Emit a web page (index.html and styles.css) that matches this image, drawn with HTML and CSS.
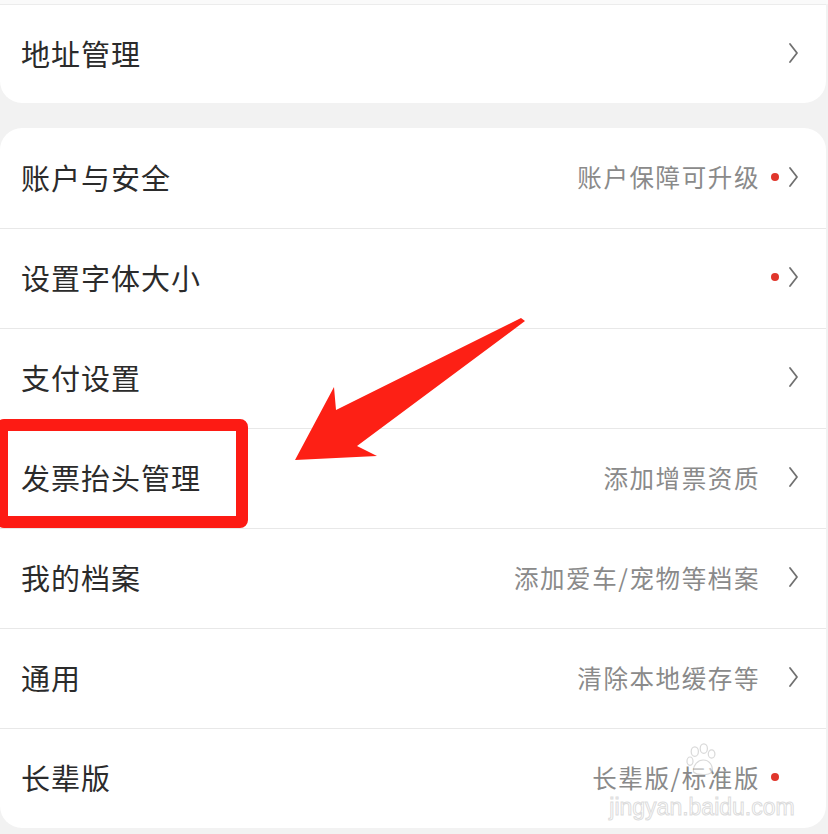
FILE: index.html
```html
<!DOCTYPE html>
<html lang="zh">
<head>
<meta charset="utf-8">
<link rel="stylesheet" href="styles.css">
</head>
<body>
<div class="page">
  <div class="card card-top">
    <div class="row">
      <span class="label">地址管理</span>
      <span class="right"><span class="slot"></span><svg class="chev" viewBox="0 0 12 22"><polyline points="2,2 9,11 2,20"/></svg></span>
    </div>
  </div>
  <div class="card card-main">
    <div class="row">
      <span class="label">账户与安全</span>
      <span class="right"><span class="hint">账户保障可升级</span><span class="slot"><i class="dot"></i></span><svg class="chev" viewBox="0 0 12 22"><polyline points="2,2 9,11 2,20"/></svg></span>
    </div>
    <div class="row">
      <span class="label">设置字体大小</span>
      <span class="right"><span class="slot"><i class="dot"></i></span><svg class="chev" viewBox="0 0 12 22"><polyline points="2,2 9,11 2,20"/></svg></span>
    </div>
    <div class="row">
      <span class="label">支付设置</span>
      <span class="right"><span class="slot"></span><svg class="chev" viewBox="0 0 12 22"><polyline points="2,2 9,11 2,20"/></svg></span>
    </div>
    <div class="row">
      <span class="label">发票抬头管理</span>
      <span class="right"><span class="hint">添加增票资质</span><span class="slot"></span><svg class="chev" viewBox="0 0 12 22"><polyline points="2,2 9,11 2,20"/></svg></span>
    </div>
    <div class="row">
      <span class="label">我的档案</span>
      <span class="right"><span class="hint">添加爱车/宠物等档案</span><span class="slot"></span><svg class="chev" viewBox="0 0 12 22"><polyline points="2,2 9,11 2,20"/></svg></span>
    </div>
    <div class="row">
      <span class="label">通用</span>
      <span class="right"><span class="hint">清除本地缓存等</span><span class="slot"></span><svg class="chev" viewBox="0 0 12 22"><polyline points="2,2 9,11 2,20"/></svg></span>
    </div>
    <div class="row">
      <span class="label">长辈版</span>
      <span class="right"><span class="hint">长辈版/标准版</span><span class="slot"><i class="dot"></i></span><span class="chev-space"></span></span>
    </div>
  </div>

  <div class="mark-box"></div>
  <svg class="arrow" viewBox="0 0 828 834">
    <polygon points="295,460 334,387 336,410 521,318 525,321 357,446 377,456"/>
  </svg>
  <div class="watermark">
    <svg class="paw" viewBox="0 0 60 60">
      <ellipse cx="18" cy="16" rx="6" ry="8"/>
      <ellipse cx="33" cy="11" rx="6" ry="8"/>
      <ellipse cx="46" cy="20" rx="5.5" ry="7"/>
      <ellipse cx="10" cy="32" rx="5" ry="7"/>
      <path d="M16 50 C14 38 24 30 32 30 C42 30 50 40 46 50 C42 56 22 56 16 50 Z"/>
    </svg>
    <span class="wm-text">jingyan.baidu.com</span>
  </div>
</div>
</body>
</html>
```

FILE: styles.css
```css
html, body {
  margin: 0;
  padding: 0;
}
body {
  background: #f2f2f2;
  font-family: "Noto Sans CJK SC", "Noto Sans", sans-serif;
  width: 828px;
  height: 834px;
  overflow: hidden;
}
.page {
  position: relative;
  width: 828px;
  height: 834px;
  padding-top: 4px;
  box-sizing: border-box;
  background: linear-gradient(#fafafa, #fafafa) top / 100% 4px no-repeat, #f2f2f2;
}
.card {
  background: #fff;
  margin-right: 2px;
}
.card-top {
  border-top: 1px solid #ececec;
  border-radius: 0 0 22px 22px;
  height: 98px;
}
.card-top .row {
  height: 98px;
}
.card-main {
  margin-top: 25px;
  border-radius: 22px;
  overflow: hidden;
}
.row {
  height: 100px;
  box-sizing: border-box;
  display: flex;
  align-items: center;
  justify-content: space-between;
  padding: 0 26px 3px 21px;
}
.card-main .row + .row {
  border-top: 1px solid #e8e8e8;
}
.label {
  font-size: 29px;
  color: #2b2b2b;
  letter-spacing: 1px;
}
.right {
  display: flex;
  align-items: center;
}
.hint {
  font-size: 24.5px;
  color: #8a8a8a;
  letter-spacing: 1.6px;
}
.slot {
  width: 28px;
  display: flex;
  align-items: center;
  justify-content: center;
}
.dot {
  display: block;
  width: 8px;
  height: 8px;
  border-radius: 50%;
  background: #e0362c;
  margin-left: 2px;
}
.chev {
  width: 12px;
  height: 22px;
}
.chev polyline {
  fill: none;
  stroke: #707070;
  stroke-width: 1.8;
  stroke-linecap: round;
  stroke-linejoin: round;
}
.chev-space {
  width: 12px;
}
.mark-box {
  position: absolute;
  left: -4px;
  top: 419px;
  width: 252px;
  height: 109px;
  box-sizing: border-box;
  border: 12px solid #fd1b14;
  border-radius: 8px;
}
.arrow {
  position: absolute;
  left: 0;
  top: 0;
  width: 828px;
  height: 834px;
}
.arrow polygon {
  fill: #fd2015;
}
.watermark {
  position: absolute;
  left: 612px;
  top: 742px;
  width: 180px;
  height: 84px;
  display: flex;
  flex-direction: column;
  align-items: center;
}
.paw {
  width: 36px;
  height: 36px;
}
.paw ellipse, .paw path {
  fill: rgba(255,255,255,0.55);
  stroke: rgba(180,180,180,0.5);
  stroke-width: 2;
}
.wm-text {
  margin-top: 17px;
  line-height: 24px;
  font-family: "Liberation Sans", Arial, sans-serif;
  font-size: 23px;
  color: rgba(255,255,255,0.6);
  -webkit-text-stroke: 1px rgba(190,190,190,0.55);
}
```
